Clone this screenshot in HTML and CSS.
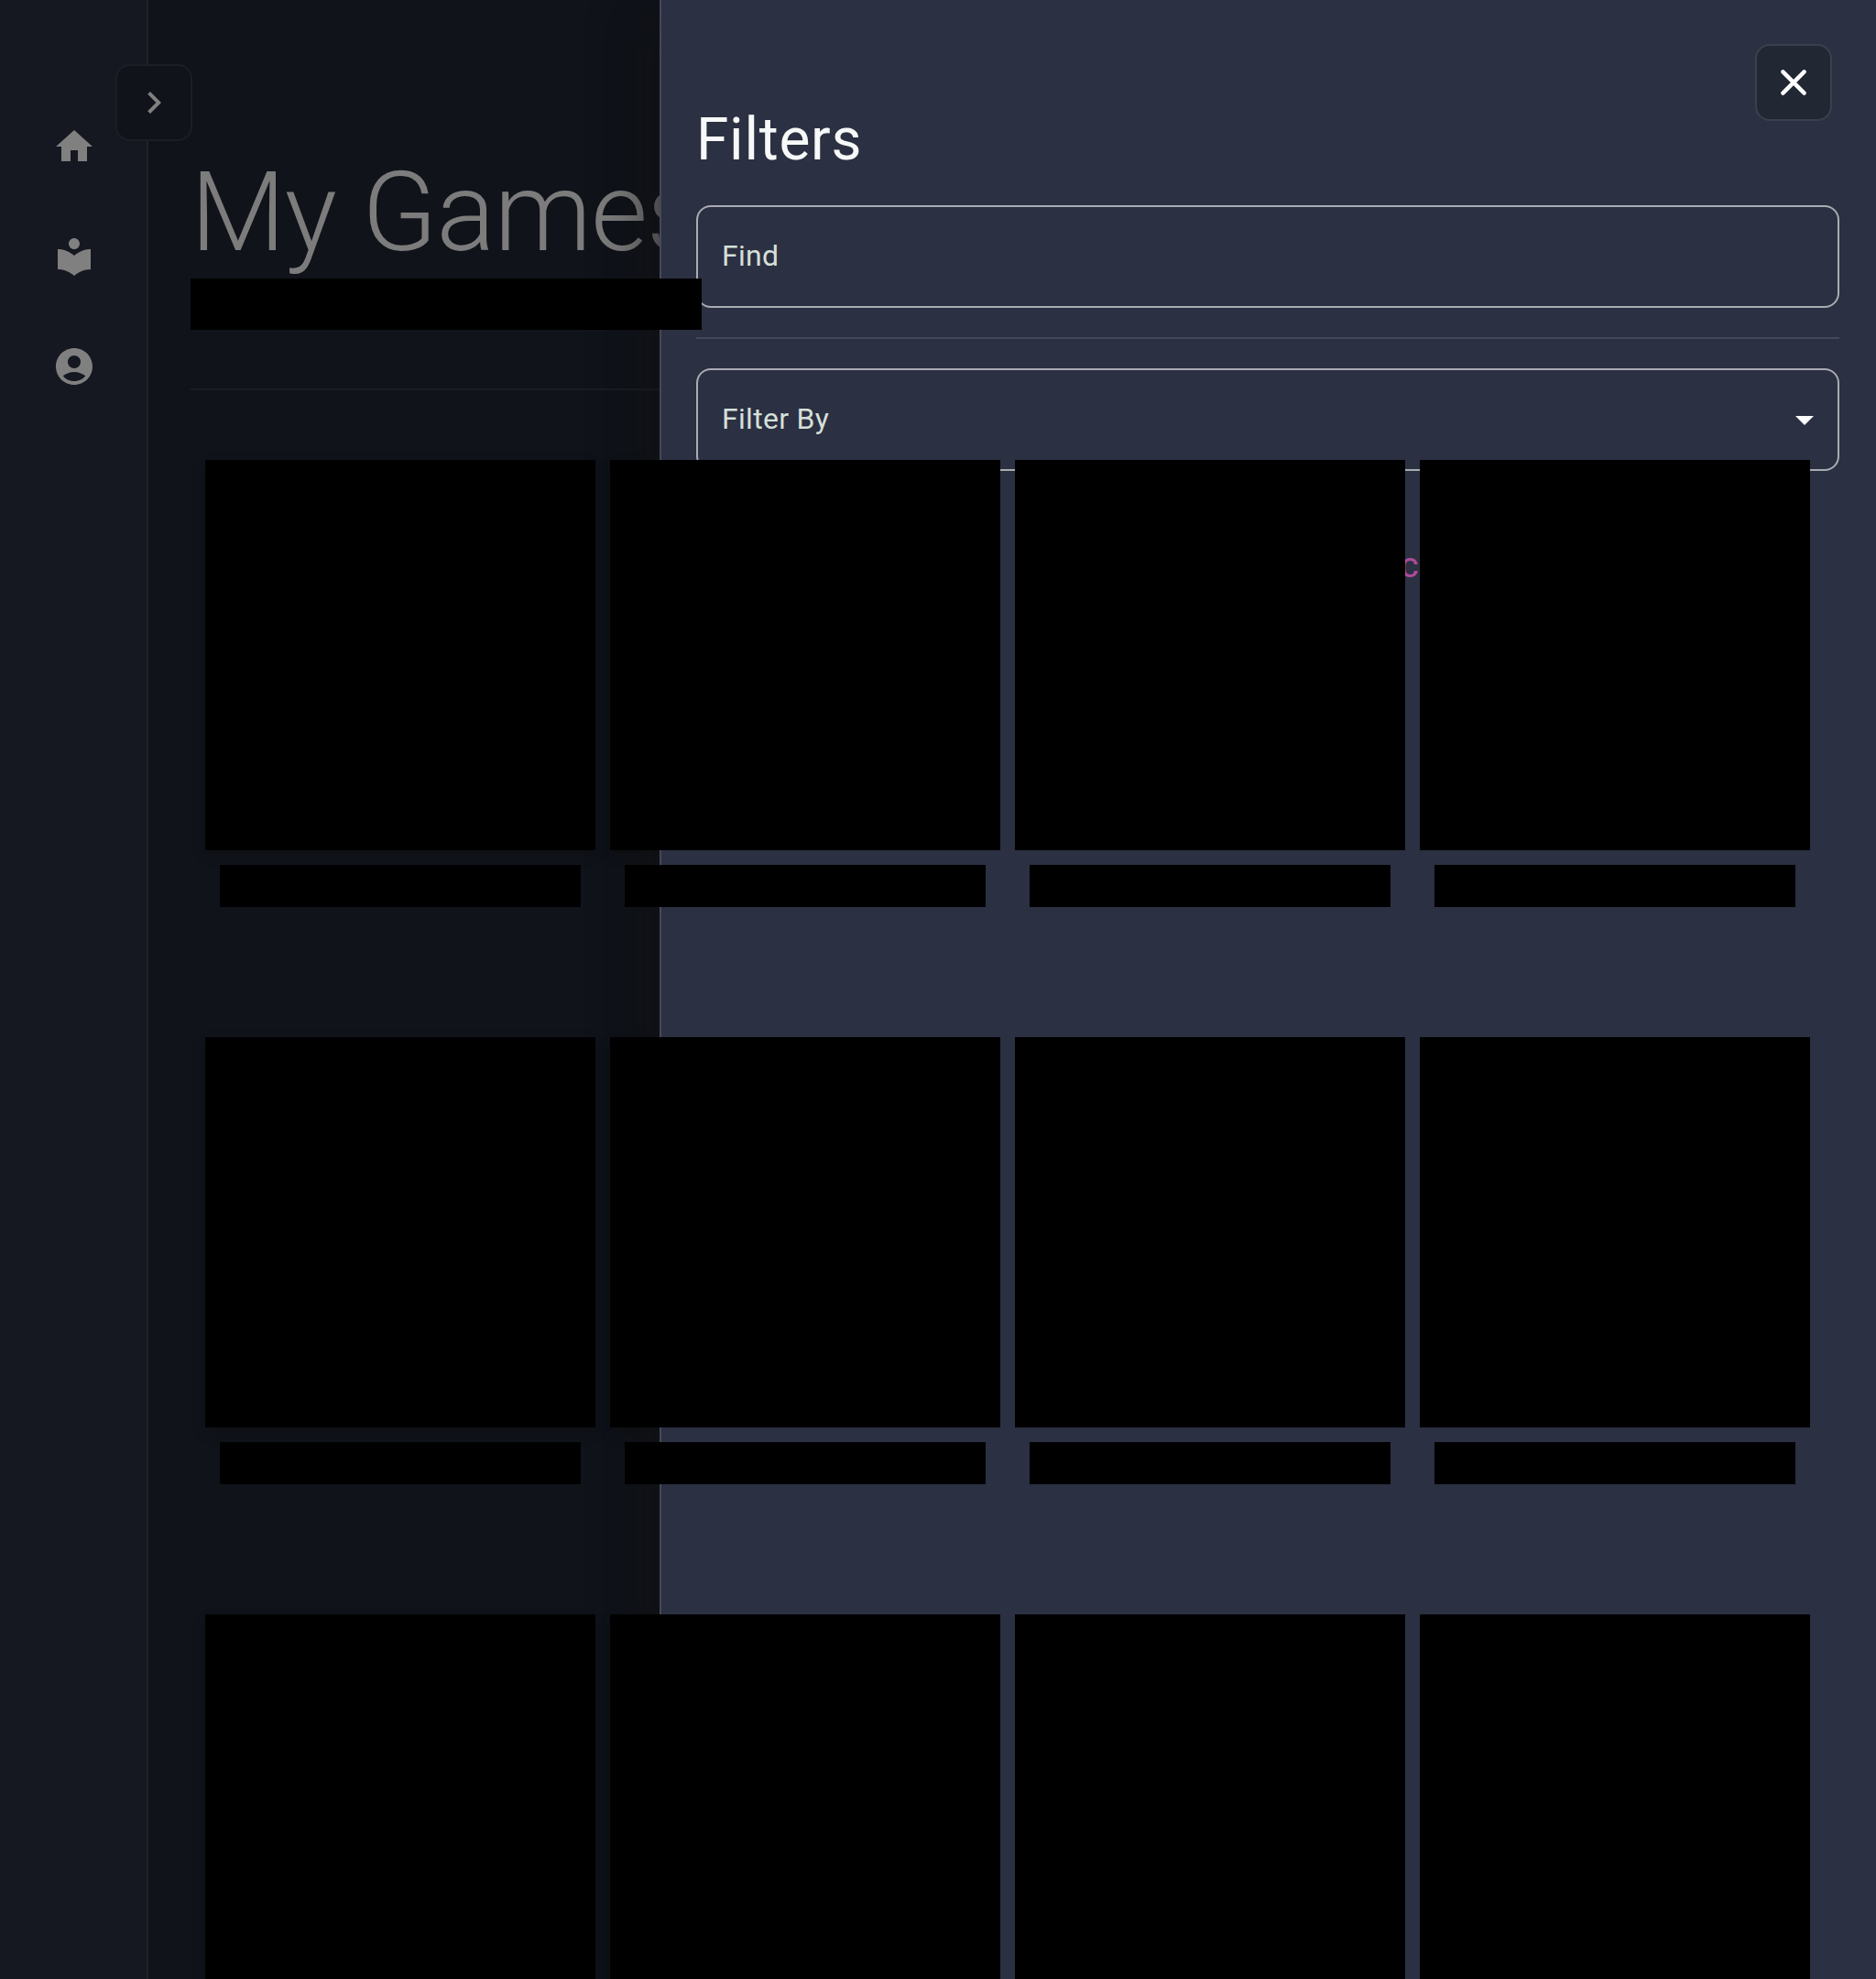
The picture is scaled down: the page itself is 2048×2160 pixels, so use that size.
FILE: index.html
```
<!DOCTYPE html>
<html lang="en">
<head>
<meta charset="utf-8">
<title>My Games</title>
<link rel="stylesheet" href="styles.css">
</head>
<body>
<div class="app">
  <nav class="sidebar">
    <svg class="icon" viewBox="0 0 24 24"><path d="M10 20v-6h4v6h5v-8h3L12 3 2 12h3v8z"/></svg>
    <svg class="icon" viewBox="0 0 24 24"><path d="M12 11.55C9.64 9.35 6.48 8 3 8v11c3.48 0 6.64 1.35 9 3.55 2.36-2.19 5.52-3.55 9-3.55V8c-3.48 0-6.64 1.35-9 3.55zM12 8c1.66 0 3-1.34 3-3s-1.34-3-3-3-3 1.34-3 3 1.34 3 3 3z"/></svg>
    <svg class="icon" viewBox="0 0 24 24"><path d="M12 2C6.48 2 2 6.48 2 12s4.48 10 10 10 10-4.48 10-10S17.52 2 12 2zm0 4c1.93 0 3.5 1.57 3.5 3.5S13.93 13 12 13s-3.5-1.57-3.5-3.5S10.07 6 12 6zm0 14c-2.03 0-4.43-.82-6.14-2.88C7.55 15.8 9.68 15 12 15s4.45.8 6.14 2.12C16.43 19.18 14.03 20 12 20z"/></svg>
    <button class="square-button expand" aria-label="Expand"><svg class="icon" viewBox="0 0 24 24"><path d="M10 6L8.59 7.41 13.17 12l-4.58 4.59L10 18l6-6z"/></svg></button>
  </nav>
  <main class="content">
    <h1 class="title">My Games</h1>
    <div class="subtitle"></div>
    <hr class="rule">
    <div class="grid">
      <div class="card"><div class="cover"></div><div class="name"></div></div>
      <div class="card"><div class="cover"></div><div class="name"></div></div>
      <div class="card"><div class="cover"></div><div class="name"></div></div>
      <div class="card"><div class="cover"></div><div class="name"></div></div>
      <div class="card"><div class="cover"></div><div class="name"></div></div>
      <div class="card"><div class="cover"></div><div class="name"></div></div>
      <div class="card"><div class="cover"></div><div class="name"></div></div>
      <div class="card"><div class="cover"></div><div class="name"></div></div>
      <div class="card"><div class="cover"></div><div class="name"></div></div>
      <div class="card"><div class="cover"></div><div class="name"></div></div>
      <div class="card"><div class="cover"></div><div class="name"></div></div>
      <div class="card"><div class="cover"></div><div class="name"></div></div>
    </div>
  </main>
  <aside class="drawer">
    <button class="square-button close" aria-label="Close"><svg class="cross" viewBox="0 0 28 28"><path d="M2.4 2.4l23.2 23.2M25.6 2.4L2.4 25.6"/></svg></button>
    <h2 class="drawer-title">Filters</h2>
    <div class="field">Find</div>
    <hr class="drawer-rule">
    <div class="field">Filter By<svg class="icon arrow" viewBox="0 0 24 24"><path d="M7 10l5 5 5-5z"/></svg></div>
    <div class="action">C</div>
  </aside>
</div>
</body>
</html>
```
FILE: styles.css
```
* { box-sizing: border-box; }

body {
  margin: 0;
  background: #10131a;
  font-family: Roboto, "Liberation Sans", sans-serif;
}

.app {
  position: relative;
  display: flex;
  height: 2160px;
  overflow: hidden;
}

.icon {
  display: block;
  flex: none;
  width: 48px;
  height: 48px;
  fill: #808080;
}

.sidebar {
  position: relative;
  display: flex;
  flex: none;
  flex-direction: column;
  align-items: center;
  gap: 72px;
  width: 162px;
  padding-top: 136px;
  background: #151820;
  border-right: 2px solid #1f222a;
}

.sidebar > .icon { margin-left: 2px; }

.square-button {
  position: absolute;
  display: flex;
  align-items: center;
  justify-content: center;
  width: 84px;
  height: 84px;
  padding: 0;
  border: 2px solid #1b1e25;
  border-radius: 16px;
  background: #10131a;
}

.expand { top: 70px; left: 126px; }

.content {
  flex: 1;
  padding: 160px 56px 0 46px;
}

.title {
  margin: 0;
  font-size: 120px;
  font-weight: 300;
  line-height: 144px;
  letter-spacing: -0.00833em;
  color: #7c7c7c;
}

/* Placeholders stay above the drawer. */
.subtitle {
  position: relative;
  z-index: 3;
  width: 558px;
  height: 56px;
  background: #000;
}

.rule {
  height: 2px;
  margin: 64px 0 0;
  border: 0;
  background: #1b1e25;
}

.grid {
  display: grid;
  grid-template-columns: repeat(4, 426px);
  grid-auto-rows: 488px;
  gap: 142px 16px;
  padding: 76px 16px 0;
}

.cover {
  position: relative;
  height: 426px;
  box-shadow: 0 6px 12px -3px rgba(14, 14, 14, .6);
}

.cover::after {
  content: "";
  position: absolute;
  z-index: 3;
  inset: 0;
  background: #000;
}

.name {
  position: relative;
  z-index: 3;
  height: 46px;
  margin: 16px 16px 0;
  background: #000;
}

.drawer {
  position: absolute;
  z-index: 2;
  top: 0;
  right: 0;
  width: 1328px;
  height: 100%;
  padding: 114px 40px 0 38px;
  background: #2b3042;
  border-left: 2px solid #44495a;
  box-shadow: 0 32px 48px 4px rgba(17, 17, 17, .45), 0 12px 60px 10px rgba(17, 17, 17, .4);
}

.close {
  top: 48px;
  right: 48px;
  background: #222734;
  border-color: #3c404c;
}

.cross {
  width: 28px;
  height: 28px;
  fill: none;
  stroke: #fff;
  stroke-width: 4.4;
  stroke-linecap: round;
}

.drawer-title {
  margin: 0 0 33px;
  font-size: 64px;
  font-weight: 400;
  line-height: 77px;
  letter-spacing: 0.0115em;
  color: #f7f9f8;
}

.field {
  display: flex;
  align-items: center;
  justify-content: space-between;
  height: 112px;
  padding: 0 12px 2px 26px;
  border: 2px solid #aaacb3;
  border-radius: 16px;
  font-size: 32px;
  line-height: 46px;
  letter-spacing: 0.00938em;
  color: #d5dfd8;
}

.arrow {
  position: relative;
  top: 1px;
  fill: #fff;
}

.drawer-rule {
  height: 2px;
  margin: 32px 0;
  border: 0;
  background: #44495a;
}

.action {
  padding: 80px 0 0 769px;
  font-size: 30px;
  font-weight: 500;
  line-height: 51px;
  color: #ac4b9b;
}
```
